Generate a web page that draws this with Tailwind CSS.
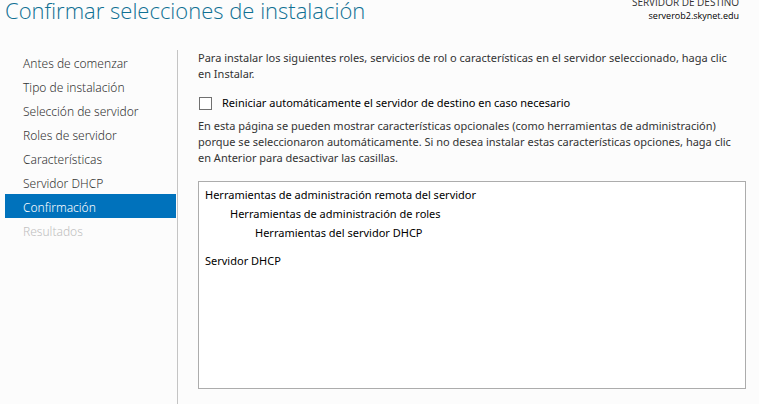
<!DOCTYPE html>
<html lang="es">
<head>
<meta charset="utf-8">
<meta name="viewport" content="width=device-width, initial-scale=1">
<title>Confirmar selecciones de instalación</title>
<script src="https://cdn.jsdelivr.net/npm/@tailwindcss/browser@4"></script>
</head>
<body class="flex h-screen flex-col overflow-hidden bg-[#fcfcfc] font-['Noto_Sans','Open_Sans',sans-serif] text-[11px] leading-4 text-[#333]">
<header class="-mt-1 flex h-[54px] shrink-0 items-start justify-between pr-5 pl-[5px]">
  <h1 class="font-['Open_Sans','Noto_Sans',sans-serif] text-[22px] leading-7 font-light whitespace-nowrap text-[#0f7093]">Confirmar selecciones de instalación</h1>
  <div class="text-right font-['Open_Sans','Noto_Sans',sans-serif] text-[10px] leading-[13px] whitespace-nowrap">
    <p>SERVIDOR DE DESTINO</p>
    <p class="text-[9px] text-black">serverob2.skynet.edu</p>
  </div>
</header>
<div class="flex min-h-0 flex-1">
  <nav class="w-[178px] shrink-0 border-r border-[#c4c4c4] pr-px pl-[5px] text-xs leading-6 font-light" aria-label="Pasos del asistente">
    <ul class="whitespace-nowrap">
      <li><a href="#antes" class="block h-6 pt-0.5 pl-[18px]">Antes de comenzar</a></li>
      <li><a href="#tipo" class="block h-6 pt-0.5 pl-[18px]">Tipo de instalación</a></li>
      <li><a href="#seleccion" class="block h-6 pt-0.5 pl-[18px]">Selección de servidor</a></li>
      <li><a href="#roles" class="block h-6 pt-0.5 pl-[18px]">Roles de servidor</a></li>
      <li><a href="#caracteristicas" class="block h-6 pt-0.5 pl-[18px]">Características</a></li>
      <li><a href="#dhcp" class="block h-6 pt-0.5 pl-[18px]">Servidor DHCP</a></li>
      <li><a href="#confirmacion" aria-current="step" class="block h-6 bg-[#0072bc] pt-0.5 pl-[18px] text-white">Confirmación</a></li>
      <li><a href="#resultados" aria-disabled="true" class="block h-6 pt-0.5 pl-[18px] text-[#bfbfbf]">Resultados</a></li>
    </ul>
  </nav>
  <main class="flex min-w-0 flex-1 flex-col pr-[13px] pb-[15px] pl-5">
    <p class="whitespace-nowrap">Para instalar los siguientes roles, servicios de rol o características en el servidor seleccionado, haga clic<br>en Instalar.</p>
    <label class="mt-[13px] flex items-center gap-2.5 pl-px text-black">
      <input type="checkbox" class="size-[13px] shrink-0 appearance-none border border-[#707070] bg-white checked:bg-[#0072bc]">
      <span class="whitespace-nowrap">Reiniciar automáticamente el servidor de destino en caso necesario</span>
    </label>
    <p class="mt-[7px] whitespace-nowrap">En esta página se pueden mostrar características opcionales (como herramientas de administración)<br>porque se seleccionaron automáticamente. Si no desea instalar estas características opciones, haga clic<br>en Anterior para desactivar las casillas.</p>
    <ul class="mt-[15px] flex-1 border border-[#acacac] bg-white px-1.5 py-[3px] leading-[19px] text-black">
      <li>Herramientas de administración remota del servidor
        <ul class="pl-[25px]">
          <li>Herramientas de administración de roles
            <ul class="pl-[25px]">
              <li>Herramientas del servidor DHCP</li>
            </ul>
          </li>
        </ul>
      </li>
      <li class="mt-[9px]">Servidor DHCP</li>
    </ul>
  </main>
</div>
</body>
</html>
